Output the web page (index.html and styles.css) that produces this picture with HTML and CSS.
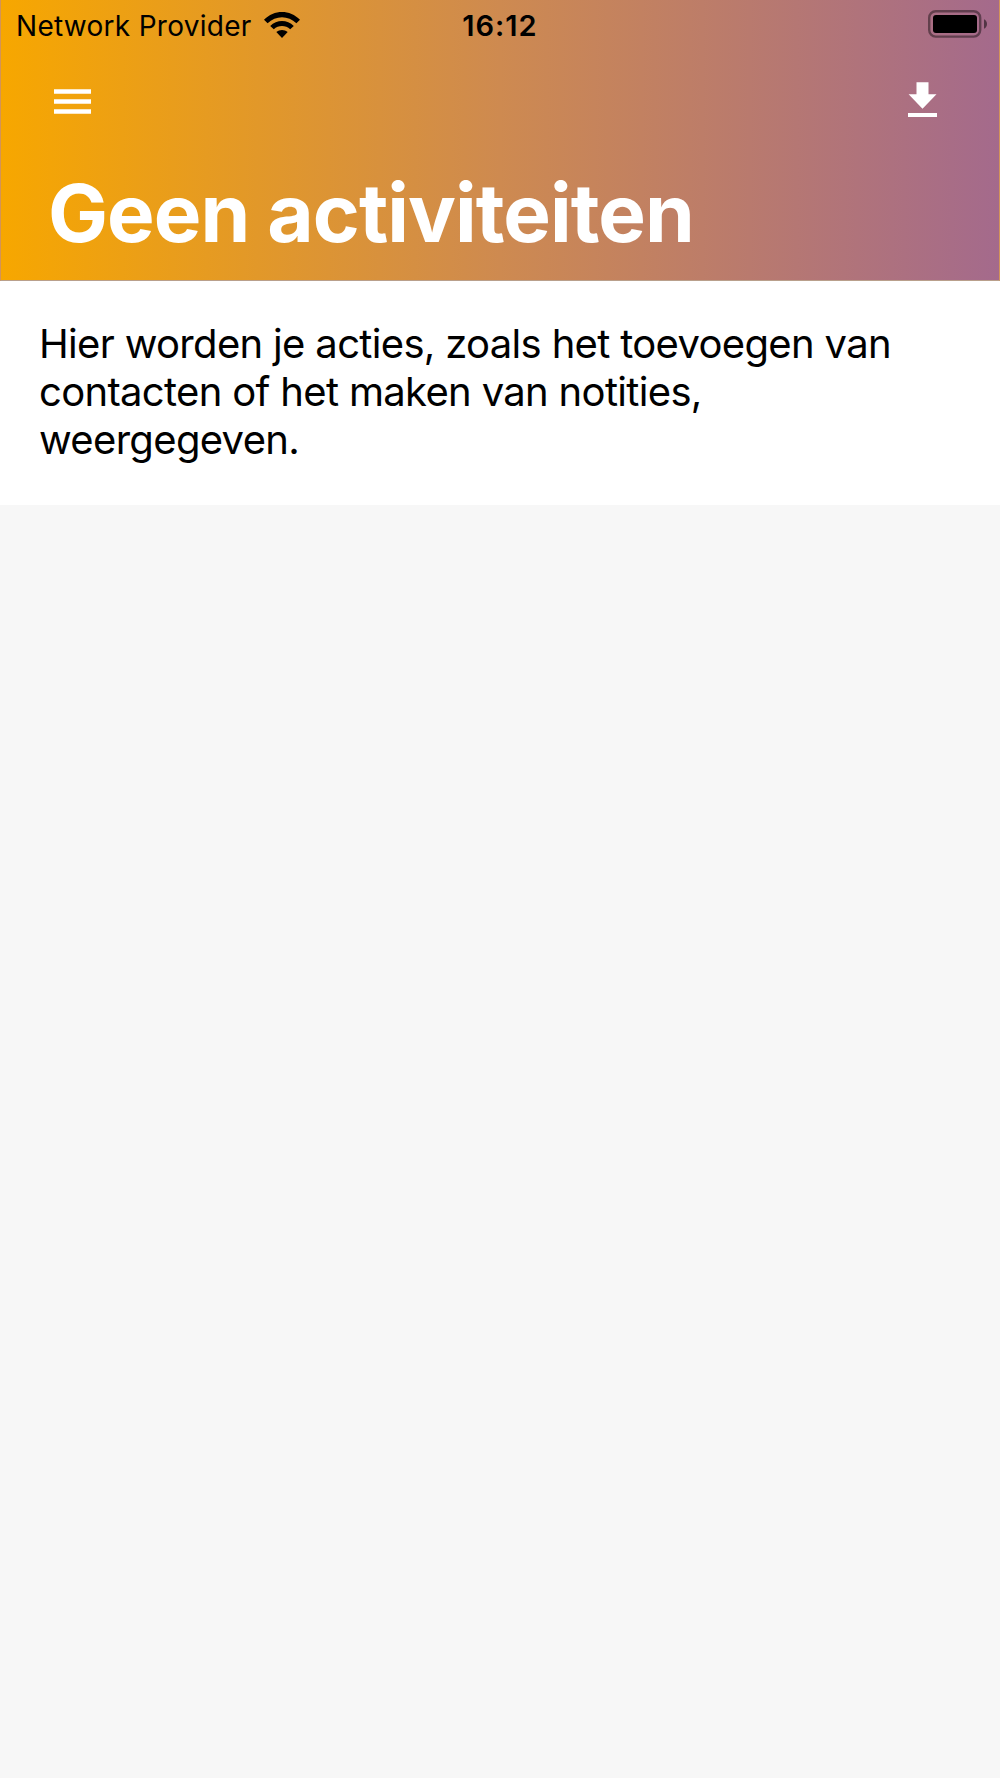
FILE: index.html
```html
<!DOCTYPE html>
<html lang="nl">
<head>
  <meta charset="UTF-8" />
  <meta name="viewport" content="width=device-width, initial-scale=1.0" />
  <title>Geen activiteiten</title>
  <link rel="stylesheet" href="styles.css">
</head>
<body>

  <header>
    <div class="status-bar">
      <div class="status-left">
        <span class="carrier">Network Provider</span>
        <svg class="wifi" width="38" height="28" viewBox="0 0 38 28">
          <path d="M1 8.8C11 -1.6 27 -1.6 37 8.8L33.4 12.3C25.3 4.2 12.7 4.2 4.6 12.3Z" />
          <path d="M7.2 14.9C13.8 8.3 24.2 8.3 30.8 14.9L27.2 18.3C22.6 13.9 15.4 13.9 10.8 18.3Z" />
          <path d="M13.3 21C16.5 18.2 21.5 18.2 24.7 21L19 27Z" />
        </svg>
      </div>
      <span class="time">16:12</span>
      <div class="status-right">
        <svg class="battery" width="60" height="28" viewBox="0 0 60 28">
          <rect x="1.2" y="1.2" width="51" height="25.4" rx="6.5" fill="none" stroke="#000" stroke-opacity=".42" stroke-width="2.4" />
          <rect x="5" y="5" width="44" height="18" rx="3" />
          <path d="M56 9.2C60 11 60 17 56 18.8Z" fill-opacity=".5" />
        </svg>
      </div>
    </div>

    <div class="toolbar">
      <svg class="menu-icon" width="37" height="26" viewBox="0 0 37 26">
        <path d="M0 .3h37v4.4H0zM0 10.3h37v4.4H0zM0 20.3h37v4.4H0z" />
      </svg>
      <svg class="download-icon" width="29" height="36" viewBox="0 0 29 36">
        <path d="M8.5 .3h12v12h8L14.5 26.7 .6 12.3h7.9zM0 30.9h29v4.2H0z" />
      </svg>
    </div>

    <h1>Geen activiteiten</h1>
  </header>

  <main class="message">
    <p>Hier worden je acties, zoals het toevoegen van contacten of het maken van notities, weergegeven.</p>
  </main>

</body>
</html>
```
FILE: styles.css
```css
* {
  margin: 0;
  padding: 0;
  box-sizing: border-box;
}

body {
  background-color: #f7f7f7;
  color: #000;
  font-family: 'Inter', sans-serif;
}

header {
  height: 281px;
  background: linear-gradient(to right, #f7a700 0%, #ce8a50 50%, #a46a8c 100%);
  border: 1px solid #d2935a;
  border-top: none;
  border-bottom-color: #b9a08c;
}

.status-bar {
  height: 50px;
  padding: 0 11px;
  display: grid;
  grid-template-columns: 1fr auto 1fr;
  align-items: center;
  font-size: 28px;
  line-height: 50px;
}

.status-left {
  padding-left: 4px;
  display: flex;
  align-items: center;
  gap: 11px;
}

.carrier {
  padding-top: 1px;
  letter-spacing: 0.28px;
}

.wifi {
  margin-top: -2px;
}

.time {
  padding-top: 1px;
  font-size: 29px;
  font-weight: 600;
  letter-spacing: 1px;
}

.status-right {
  display: flex;
  justify-content: flex-end;
}

.battery {
  margin-top: -3px;
}

.toolbar {
  height: 100px;
  padding: 32px 62px 0 53px;
  display: flex;
  justify-content: space-between;
  align-items: flex-start;
  fill: #fff;
}

.menu-icon {
  margin-top: 7px;
}

h1 {
  padding-left: 47px;
  color: #fff;
  font-size: 80px;
  font-weight: 700;
  line-height: 126px;
  letter-spacing: -0.95px;
  white-space: nowrap;
}

.message {
  height: 224px;
  padding: 39px 39px 0;
  background-color: #fff;
}

.message p {
  max-width: 880px;
  font-size: 40px;
  line-height: 48px;
  letter-spacing: -0.67px;
}
```
